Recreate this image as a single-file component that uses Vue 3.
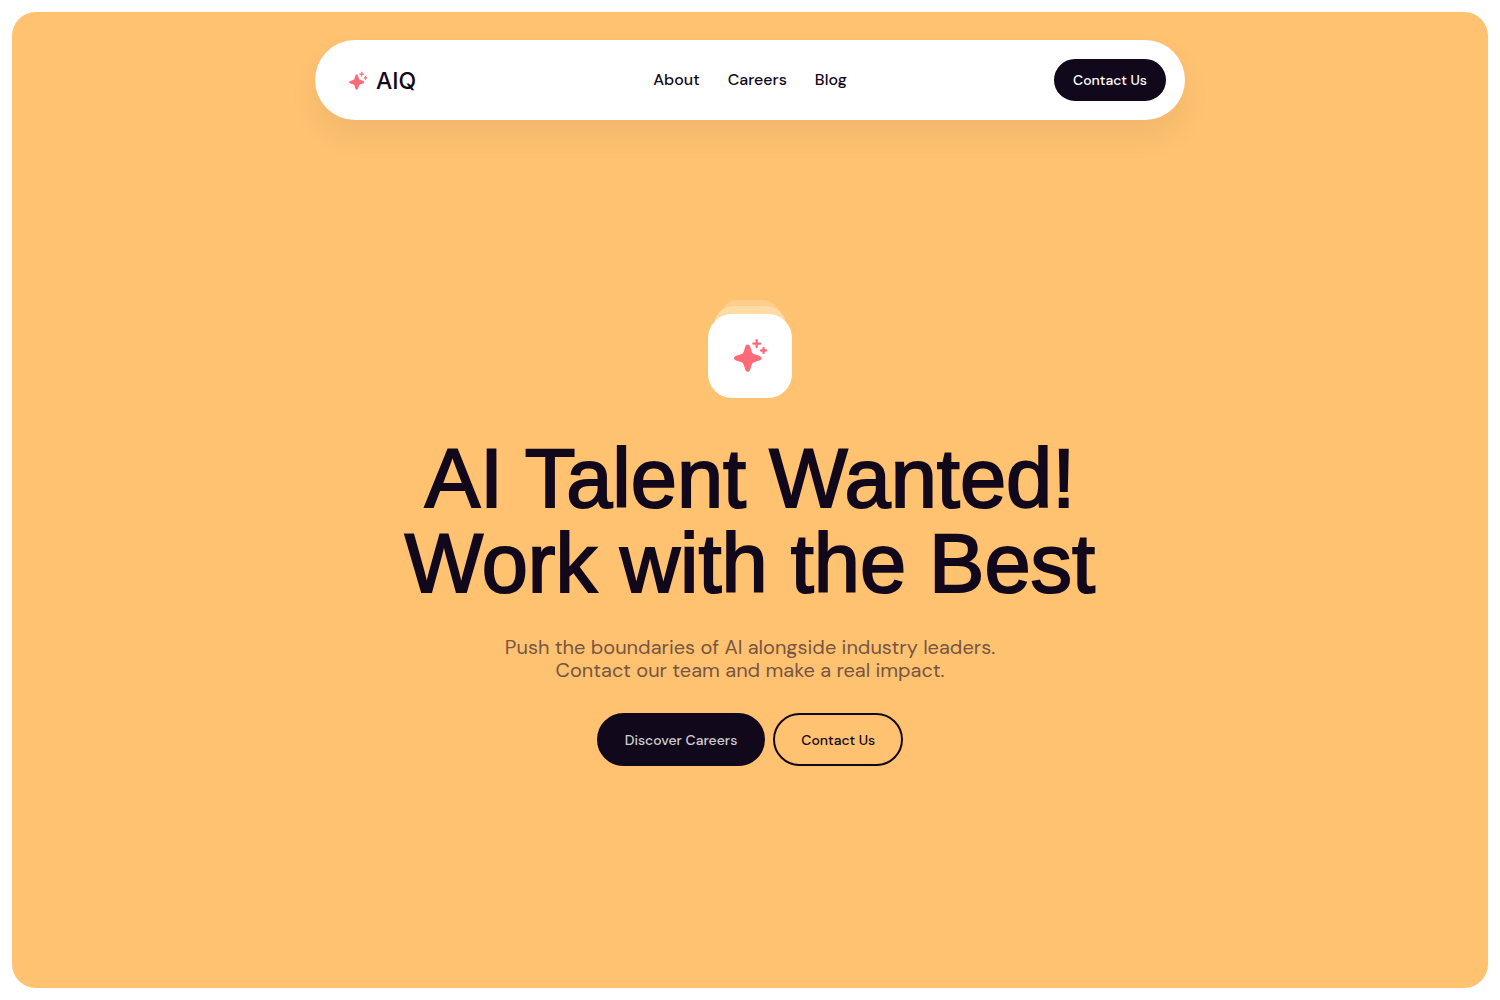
<script setup>
const links = ['About', 'Careers', 'Blog']
</script>

<template>
  <svg width="0" height="0" class="defs" aria-hidden="true">
    <symbol id="sparkle" viewBox="-1 0 36 36">
      <path
        fill="currentColor"
        d="M14.700 6.400C16 6.400 16.700 7.200 17.100 8.500L18.600 13.200C19.200 15.100 19.700 15.700 21.500 16.300L26.200 17.800C27.700 18.300 28.400 19 28.400 20.100S27.700 21.900 26.200 22.400L21.500 23.900C19.700 24.500 19.200 25.100 18.600 27L17.100 31.700C16.700 33 16 33.800 14.700 33.800S12.700 33 12.300 31.700L10.800 27C10.200 25.100 9.700 24.500 7.900 23.900L3.200 22.400C1.700 21.900 1 21.200 1 20.100S1.700 18.300 3.200 17.800L7.900 16.300C9.700 15.700 10.200 15.100 10.800 13.200L12.300 8.500C12.700 7.200 13.400 6.400 14.700 6.400Z"
      />
      <path
        fill="none"
        stroke="currentColor"
        stroke-width="2.300"
        stroke-linecap="round"
        d="M23.700 2.200v6.800M20.300 5.600h6.800M30.500 10.100v4.800M28.100 12.500h4.800"
      />
    </symbol>
  </svg>
  <div class="page">
    <div class="panel">
      <header class="bar">
        <a class="brand" href="#">
          <svg class="brand-icon" aria-hidden="true"><use href="#sparkle" /></svg>
          <span>AIQ</span>
        </a>
        <nav class="links">
          <a v-for="link in links" :key="link" href="#">{{ link }}</a>
        </nav>
        <button type="button" class="btn small dark">Contact Us</button>
      </header>
      <main class="hero">
        <div class="stack">
          <div class="tile"><svg aria-hidden="true"><use href="#sparkle" /></svg></div>
        </div>
        <h1>AI Talent Wanted!<br />Work with the Best</h1>
        <p>Push the boundaries of AI alongside industry leaders.<br />Contact our team and make a real impact.</p>
        <div class="actions">
          <button type="button" class="btn dark muted">Discover Careers</button>
          <button type="button" class="btn">Contact Us</button>
        </div>
      </main>
    </div>
  </div>
</template>

<style>
body {
  background: #fff;
}
</style>

<style scoped>
.defs {
  position: absolute;
}
.page {
  box-sizing: border-box;
  min-height: 100vh;
  padding: 12px;
  display: flex;
  font-family: "DM Sans", Inter, sans-serif;
  color: #12081b;
}
.panel {
  box-sizing: border-box;
  flex: 1;
  padding: 28px 24px;
  border-radius: 24px;
  background: #ffc271;
}
.bar {
  box-sizing: border-box;
  max-width: 870px;
  min-height: 80px;
  margin: 0 auto;
  padding: 0 19px;
  display: grid;
  grid-template-columns: 1fr auto 1fr;
  align-items: center;
  border-radius: 40px;
  background: #fff;
  box-shadow: 0 16px 32px rgba(18, 8, 27, 0.06);
}
.brand {
  padding: 2px 0 0 14px;
  display: flex;
  align-items: center;
  gap: 8px;
  color: inherit;
  font-family: Inter, sans-serif;
  font-size: 23px;
  font-weight: 500;
  text-decoration: none;
}
.brand-icon {
  width: 20px;
  height: 20px;
  color: #ff6a79;
}
.links {
  padding-bottom: 2px;
  display: flex;
  gap: 28px;
}
.links a {
  color: inherit;
  font-size: 16px;
  font-weight: 500;
  text-decoration: none;
}
.btn {
  box-sizing: border-box;
  height: 53px;
  padding: 0 26px;
  border: 2px solid #12081b;
  border-radius: 27px;
  background: transparent;
  color: #12081b;
  font-family: inherit;
  font-size: 14px;
  font-weight: 500;
  cursor: pointer;
}
.small {
  height: 42px;
  padding: 0 17px;
  justify-self: end;
}
.dark {
  background: #12081b;
  color: #fff;
}
.muted {
  color: #cfccd1;
}
.hero {
  padding-top: 180px;
  display: flex;
  flex-direction: column;
  align-items: center;
  text-align: center;
}
.stack {
  position: relative;
  padding-top: 14px;
}
.stack::before,
.stack::after {
  content: "";
  position: absolute;
}
.stack::before {
  inset: 0 12px 30px;
  border-radius: 18px;
  background: #ffce8c;
}
.stack::after {
  inset: 6px 6px 20px;
  border-radius: 20px;
  background: #ffdba5;
}
.tile {
  position: relative;
  z-index: 1;
  width: 84px;
  height: 84px;
  display: grid;
  place-items: center;
  border-radius: 24px;
  background: #fff;
  color: #ff6a79;
}
.tile svg {
  width: 36px;
  height: 36px;
}
h1 {
  margin: 38px 0 30px;
  font-family: "Liberation Sans", Arial, sans-serif;
  font-size: 83px;
  font-weight: 400;
  line-height: 85px;
  -webkit-text-stroke: 2px currentColor;
}
p {
  margin: 0 0 31px;
  color: #775542;
  font-size: 20px;
  line-height: 23px;
}
.actions {
  display: flex;
  gap: 8px;
}
</style>
